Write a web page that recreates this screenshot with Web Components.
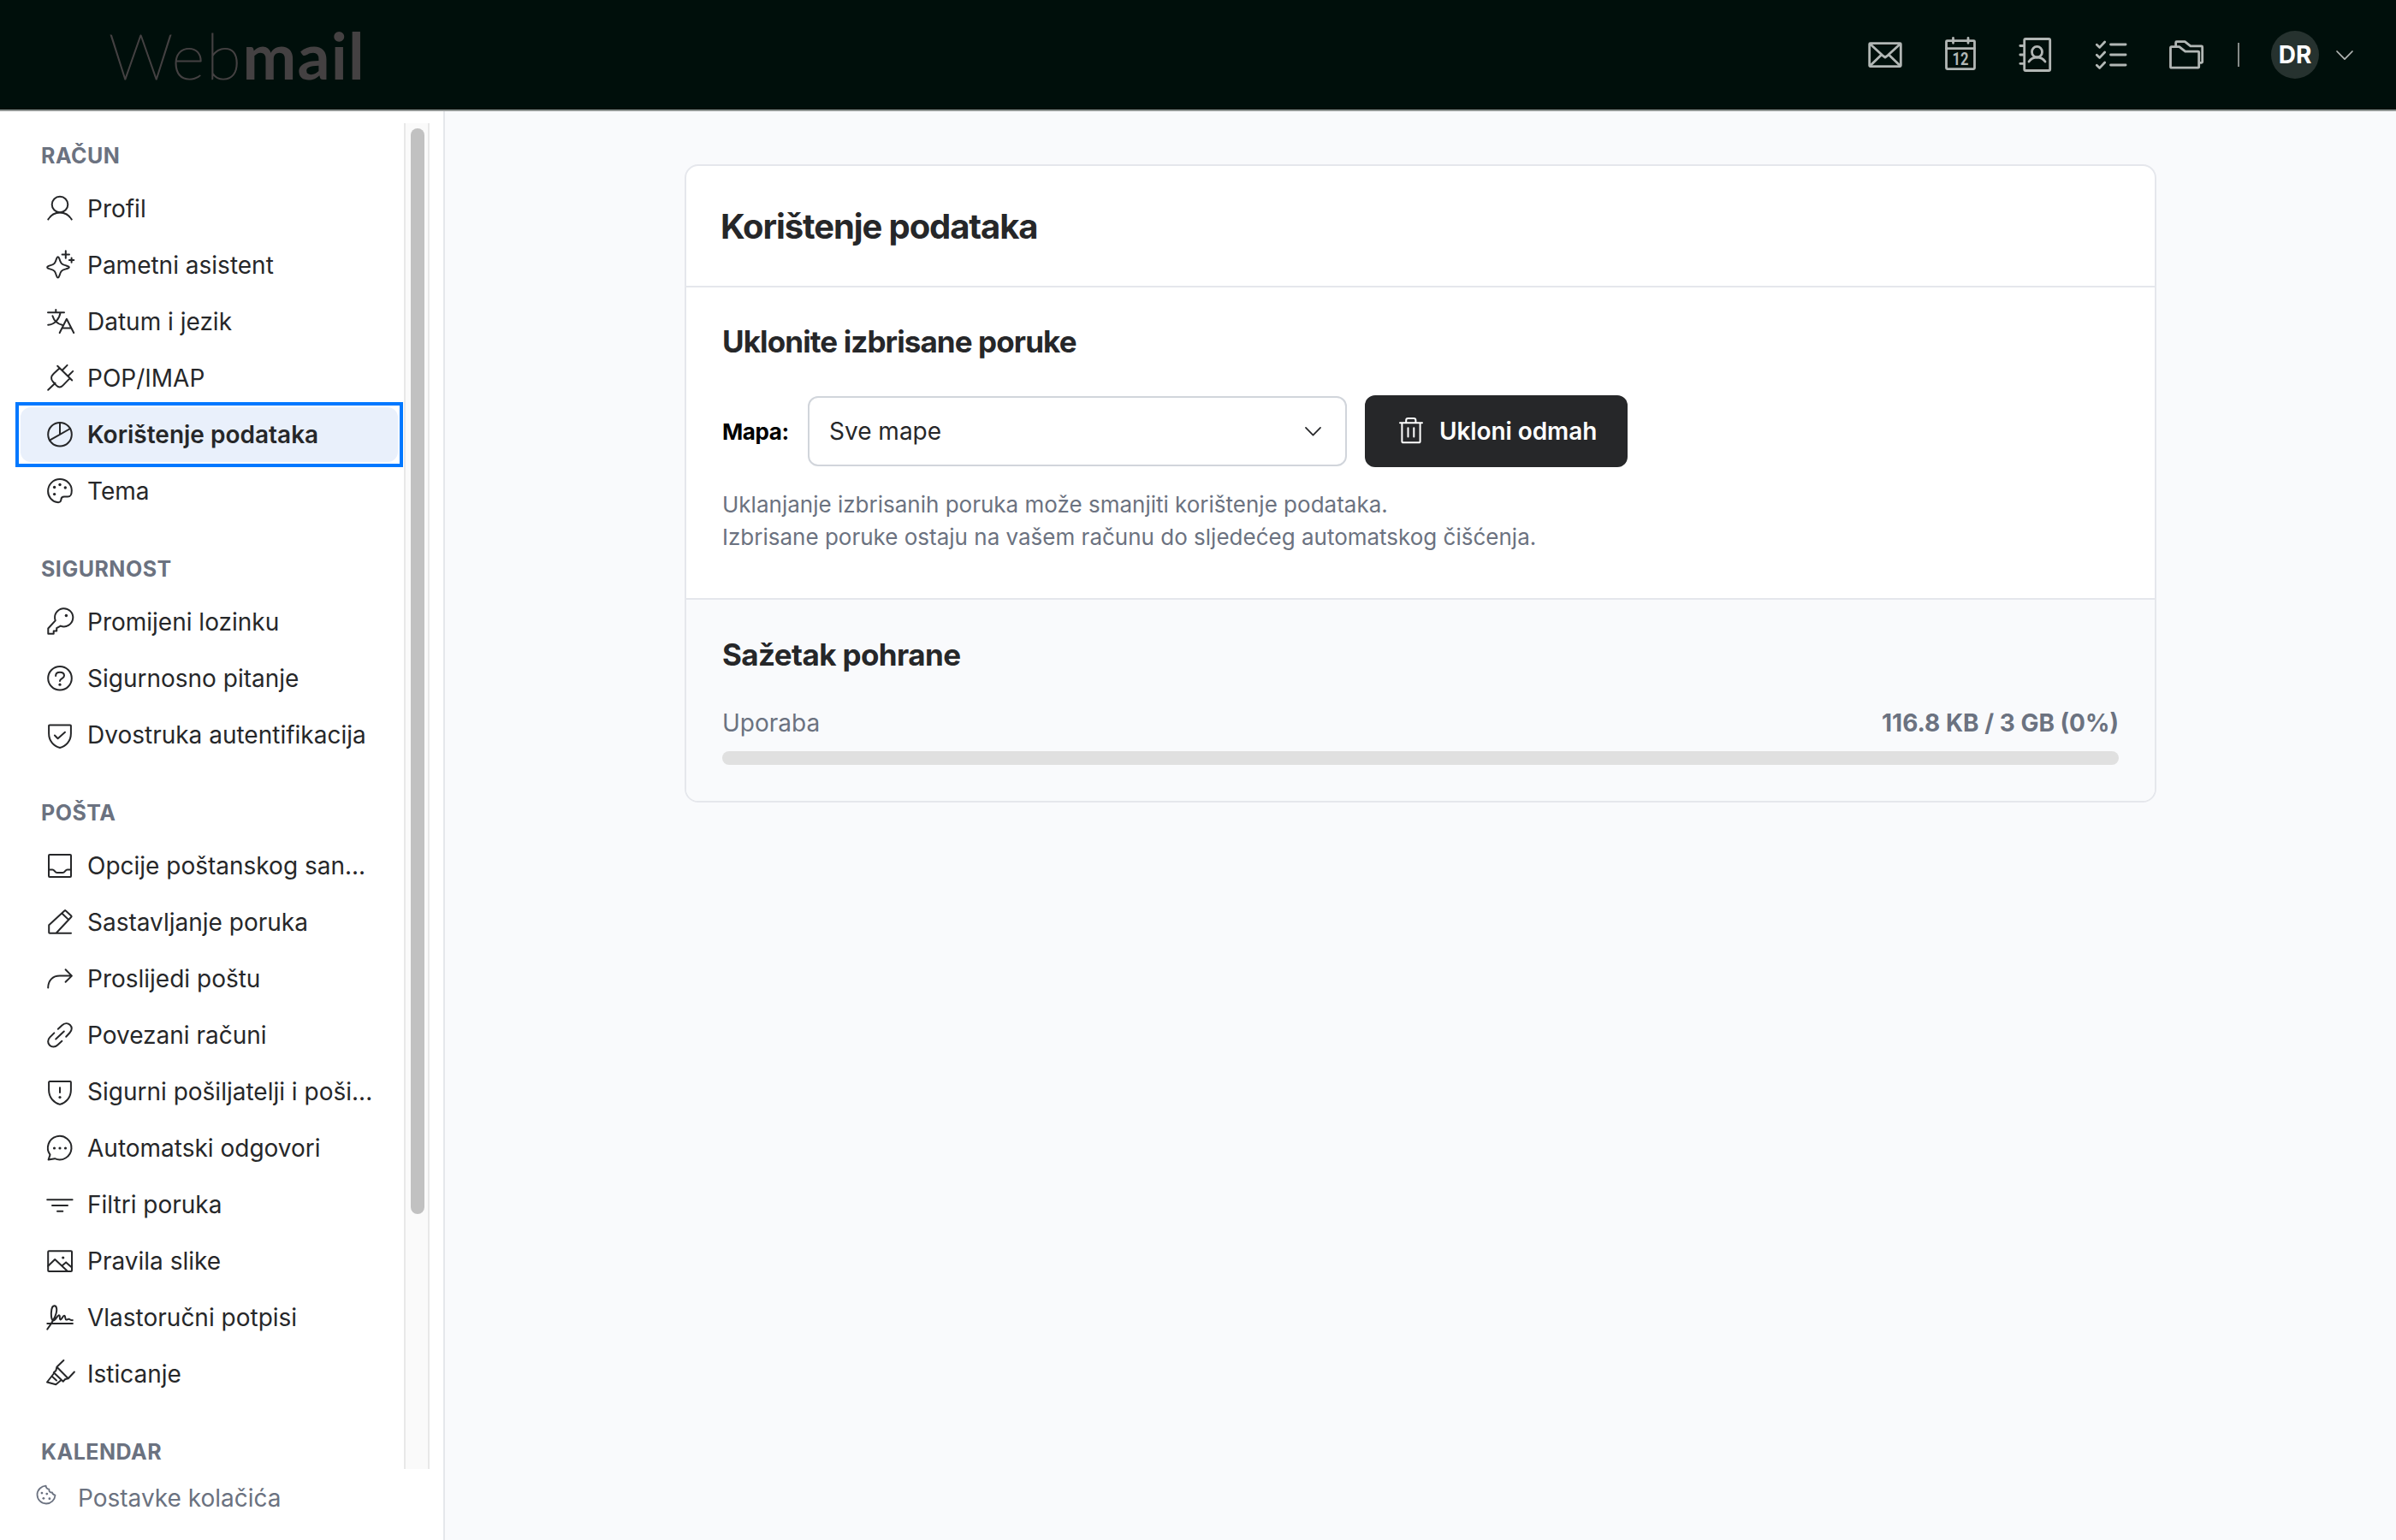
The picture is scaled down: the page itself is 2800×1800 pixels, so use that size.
<!DOCTYPE html>
<html lang="hr">
<head>
<meta charset="utf-8">
<title>Webmail - Korištenje podataka</title>
<style>
  html, body {
    margin: 0;
    height: 100%;
    font-family: Inter, "Liberation Sans", sans-serif;
    font-size: 28px;
    color: #262729;
    background: #f9fafc;
  }
</style>
</head>
<body>
<webmail-app>
  <webmail-header slot="header" initials="DR"></webmail-header>

  <settings-nav slot="nav">
    <nav-section heading="Račun">
      <nav-item icon="user">Profil</nav-item>
      <nav-item icon="sparkle">Pametni asistent</nav-item>
      <nav-item icon="translate">Datum i jezik</nav-item>
      <nav-item icon="plug">POP/IMAP</nav-item>
      <nav-item icon="pie" selected>Korištenje podataka</nav-item>
      <nav-item icon="palette">Tema</nav-item>
    </nav-section>
    <nav-section heading="Sigurnost">
      <nav-item icon="key">Promijeni lozinku</nav-item>
      <nav-item icon="question">Sigurnosno pitanje</nav-item>
      <nav-item icon="shieldCheck">Dvostruka autentifikacija</nav-item>
    </nav-section>
    <nav-section heading="Pošta">
      <nav-item icon="inbox">Opcije poštanskog san...</nav-item>
      <nav-item icon="pencil">Sastavljanje poruka</nav-item>
      <nav-item icon="forward">Proslijedi poštu</nav-item>
      <nav-item icon="link">Povezani računi</nav-item>
      <nav-item icon="shieldAlert">Sigurni pošiljatelji i poši...</nav-item>
      <nav-item icon="chat">Automatski odgovori</nav-item>
      <nav-item icon="filter">Filtri poruka</nav-item>
      <nav-item icon="image">Pravila slike</nav-item>
      <nav-item icon="signature">Vlastoručni potpisi</nav-item>
      <nav-item icon="highlighter">Isticanje</nav-item>
    </nav-section>
    <nav-section heading="Kalendar"></nav-section>
    <span slot="footer">Postavke kolačića</span>
  </settings-nav>

  <settings-card>
    <span slot="title">Korištenje podataka</span>
    <purge-form slot="body"></purge-form>
    <storage-summary slot="summary" used="116.8 KB" total="3 GB" percent="0"></storage-summary>
  </settings-card>
</webmail-app>

<script>
const ICONS = {
  // sidebar, 36 x 36
  user: `<circle cx="18" cy="13" r="9.3"/><path d="M4.3 30.4C7.2 25.6 12 22.4 18 22.4s10.8 3.2 13.7 8"/>`,
  sparkle: `<path d="M15.7 8.2c1 0 1.3 1 1.7 2.3 1.6 5.4 2.2 6.3 7.7 7.9 2.6.8 3.7 1.1 3.7 2s-1.1 1.2-3.7 2c-5.5 1.6-6.1 2.5-7.7 7.9-.4 1.3-.7 2.3-1.7 2.3s-1.3-1-1.700-2.300c-1.600-5.400-2.200-6.300-7.700-7.900-2.600-.8-3.100-1.100-3.100-2s.5-1.200 3.100-2c5.500-1.600 6.100-2.500 7.700-7.900.4-1.300.7-2.300 1.700-2.300z"/><path d="M24.8 1.3v8.400M20.600 5.500H29M31.600 9.400v5.400M28.900 12.100h5.400"/>`,
  translate: `<path d="M4 7.200h19M13.300 4v3.200M18.600 7.400C17.500 14.500 12 21.500 4.200 21.800M9.400 11.300C11 16.500 15 20.500 20.600 21.800M17.700 31l8.200-16.200L34.200 31M20.600 25.600h10.600"/>`,
  plug: `<path d="M4.200 31.800l8.300-8.100M15.200 3.800l17 16.700M21.500 8l5.100-5.100M28.300 14.800l4.900-4.900M17.700 6.300l-7 6.500c-3.200 3-3.600 6.600-.7 9.500l4 4.300c2.500 2.500 5 2.400 7.400 0l8-8.200"/>`,
  pie: `<circle cx="18" cy="17.800" r="13.800"/><path d="M18 17.800V4M6 24.700l24-13.700"/>`,
  palette: `<path d="M14.800 31C8.500 30 4.100 24.600 4.100 18 4.100 10.300 10.300 4.100 18 4.100S31.800 10 31.800 17.300c0 5.600-1.300 7.300-4.600 7.300h-4.100c-2.600 0-3.500 1.100-3.700 3.200-.2 2.500-1.500 3.800-4.600 3.200z"/><g fill="currentColor" stroke="none"><circle cx="11.600" cy="13.500" r="1.700"/><circle cx="18" cy="10.500" r="1.700"/><circle cx="24.300" cy="14" r="1.700"/><circle cx="11.600" cy="21.600" r="1.700"/></g>`,
  key: `<path d="M12.700 16.300L4.300 25.500v6.300h6.400v-3.300h3.500v-3.400l4.600-2.500A10.600 10.600 0 1 0 12.700 16.300z"/><circle cx="25.400" cy="10.500" r="1.700" fill="currentColor" stroke="none"/>`,
  question: `<circle cx="18" cy="17.800" r="13.800"/><path d="M13.100 15c0-2.600 2-4.200 4.900-4.200s5 1.600 5 4c0 3.400-5 3.200-5 6.200"/><circle cx="18" cy="25.200" r="1.600" fill="currentColor" stroke="none"/>`,
  shieldCheck: `<path d="M6 6.400h24a.9.9 0 0 1 .9.9v9C30.900 25.300 25 31.400 18 33 11 31.400 5.100 25.300 5.100 16.300v-9a.9.9 0 0 1 .9-.9zM11.900 18.500l3.700 3.700 8.400-7.400"/>`,
  inbox: `<rect x="5" y="5" width="26" height="26" rx="1"/><path d="M5 22.400h4.300c2.500 0 2.600 3.700 5.500 3.700h6.400c2.900 0 3-3.700 5.500-3.700H31"/>`,
  pencil: `<path d="M31 30.700H6a.8.8 0 0 1-.8-.8v-8.600L23.400 4.500a1 1 0 0 1 1.400 0l6.500 5.900a1 1 0 0 1 0 1.400L13.800 30.500M20.300 7.500l8 7.600"/>`,
  forward: `<path d="M4.200 28.500C4.200 20 9.500 14.600 18 14.600h13.600M24.600 7.300l7.300 7.300-7.300 7.200"/>`,
  link: `<path d="M13.200 22.500l9.600-9M15.800 10.800l4.600-4.300c3.200-3 7-2.900 9.500-.5s2.500 6.200-.3 9l-4.400 4.700M11.300 15.400l-5 5c-2.800 2.800-2.800 6.800-.3 9.300s6.500 2.500 9.200-.2l5.200-4.700"/>`,
  shieldAlert: `<path d="M6 6.100h24a.9.9 0 0 1 .9.9v9C30.900 25 25 31.100 18 32.900 11 31.100 5.100 25 5.100 16V7a.9.9 0 0 1 .9-.9zM18 13.300v5.800"/><circle cx="18" cy="24.500" r="1.600" fill="currentColor" stroke="none"/>`,
  chat: `<path d="M4.600 31.600l1.900-5.900A13.800 13.800 0 1 1 12 30.200z"/><g fill="currentColor" stroke="none"><circle cx="11.500" cy="18" r="1.600"/><circle cx="18" cy="18" r="1.600"/><circle cx="24.500" cy="18" r="1.600"/></g>`,
  filter: `<path d="M3.200 12.300h29.400M9 19.100h18M15 25.800h6.300"/>`,
  image: `<rect x="4.200" y="6.300" width="27.800" height="23.800" rx="1"/><path d="M4.200 23.800l8-7.800 14.600 13.700M20.500 23.400l4.600-4 6.900 6"/><circle cx="21.700" cy="14" r="1.600" fill="currentColor" stroke="none"/>`,
  signature: `<path d="M3.300 25h29.600M3.300 31.600C8.500 25 15 14 14.200 7.800 13.600 3 9.300 3.100 8.300 8.500c-.9 5.500-.6 12.700 2 13 2.500.2 4.500-6 6.500-6.200 2.100-.1.100 4.900 1.600 5.200 1.700.3 3-4.700 4.600-4.700 1.800 0 .7 4.500 2.400 4.700 1.500.1 2-1.200 3.200-.8 1.200.5 1.600 1.700 4.200 1.400"/>`,
  highlighter: `<path d="M22.400 2l-8 7.700-1 4.300-2.600 2.300 11 10.400 2.400-2.700 3.500-.8 7.200-7.700M14.400 9.700l13.300 13.500M10.800 17.500L3 27.500l10.300 2.800 6-5M8.500 20.500l5.500 5"/>`,
  cookie: `<path d="M17.500 4.600c-6.800.4-13 6-13 13.400 0 7.500 6 13.500 13.500 13.500 7.200 0 13.100-5.600 13.500-12.800-2.400-.3-4-1.500-4.500-3.900-3.200 0-5-1.700-4.700-4.900-3-.4-4.700-2.300-4.800-5.300z"/><g fill="currentColor" stroke="none"><circle cx="11.500" cy="15.500" r="1.800"/><circle cx="19" cy="16.800" r="1.800"/><circle cx="14" cy="23.500" r="1.800"/><circle cx="23" cy="24" r="1.800"/></g>`,
  // header, 40 x 40
  mail: `<rect x="1.700" y="6.600" width="36.600" height="27" rx="1"/><path d="M2.500 7.500L17 20.800l3 2.200 3-2.200L37.500 7.500M2.500 32.800L16 19.800M37.500 32.800L24 19.800"/>`,
  calendar: `<rect x="3.500" y="3.600" width="33" height="33" rx="1"/><path d="M3.500 12.600h33M11.500.3v6M29 .3v6"/><text x="20" y="31.500" text-anchor="middle" textLength="19" lengthAdjust="spacingAndGlyphs" font-family="Roboto, sans-serif" font-size="20.500" font-weight="700" fill="currentColor" stroke="none">12</text>`,
  contacts: `<rect x="6.700" y="1.500" width="30" height="37" rx="1.500"/><path d="M1.800 9.500h4.900M1.800 20h4.900M1.800 30.300h4.900M12 28c2-3 5.300-5 9.500-5s7.500 2 9.500 5"/><ellipse cx="21.500" cy="16.700" rx="6" ry="6.300"/>`,
  tasks: `<path d="M19.500 8h17.600M19.500 20h17.600M19.500 32h17.600M3.300 8.200l3.400 3.200L12.700 5M3.300 20.200l3.400 3.200 6-6.400M3.300 32.200l3.400 3.200 6-6.400"/>`,
  folders: `<path d="M2.500 10.700h9.200l7 5.400h15a1 1 0 0 1 1 1v17.100a1 1 0 0 1-1 1H2.500a1 1 0 0 1-1-1V11.700a1 1 0 0 1 1-1zM7.700 10V5.700a1 1 0 0 1 1-1h9.600l6.600 5.200h12.800a1 1 0 0 1 1 1v17.400a1 1 0 0 1-1 1h-2.500"/>`,
  // shared
  chevron: `<path d="M1 1l9 9.200L19 1"/>`,
  trash: `<path d="M1 7.200h26M8.200 7V4.300A2.200 2.200 0 0 1 10.400 2.100h6.800a2.200 2.200 0 0 1 2.200 2.200V7M3.400 7.200V29a1.300 1.300 0 0 0 1.300 1.300h18.600a1.300 1.300 0 0 0 1.300-1.300V7.200M10.500 13.200v10.300M17.300 13.200v10.300"/>`
};

// <ui-icon name size box stroke>: box is "w h" of the drawing's own grid
class UiIcon extends HTMLElement {
  connectedCallback() {
    const root = this.shadowRoot || this.attachShadow({ mode: "open" });
    const [w, h] = (this.getAttribute("box") || "36 36").split(" ");
    const width = this.getAttribute("size") || w;
    root.innerHTML = `
      <style>
        :host { display: block; flex: none; line-height: 0; }
        svg { display: block; overflow: visible; }
      </style>
      <svg width="${width}" height="${(width * h) / w}" viewBox="0 0 ${w} ${h}"
        fill="none" stroke="currentColor" stroke-width="${this.getAttribute("stroke") || 2}"
        stroke-linecap="round" stroke-linejoin="round">${ICONS[this.getAttribute("name")]}</svg>`;
  }
}
customElements.define("ui-icon", UiIcon);

class WebmailApp extends HTMLElement {
  constructor() {
    super();
    this.attachShadow({ mode: "open" }).innerHTML = `
      <style>
        :host { display: flex; flex-direction: column; height: 100vh; min-height: 1800px; }
        .page { display: flex; flex: 1; min-height: 0; }
        main { flex: 1; display: flex; justify-content: center; align-items: flex-start; padding-top: 62px; }
      </style>
      <slot name="header"></slot>
      <div class="page">
        <slot name="nav"></slot>
        <main><slot></slot></main>
      </div>`;
  }
}
customElements.define("webmail-app", WebmailApp);

class WebmailHeader extends HTMLElement {
  constructor() {
    super();
    this.attachShadow({ mode: "open" });
  }

  connectedCallback() {
    const apps = ["mail", "calendar", "contacts", "tasks", "folders"];
    this.shadowRoot.innerHTML = `
      <style>
        :host {
          display: flex;
          align-items: center;
          justify-content: space-between;
          box-sizing: border-box;
          height: 130px;
          padding: 0 50px 0 127px;
          border-bottom: 2px solid #919694;
          background: #000f0b;
          color: #b2b7b5;
        }
        .logo {
          font-family: Lato, sans-serif;
          font-size: 75px;
          line-height: 90px;
          font-weight: 100;
          letter-spacing: 1.8px;
          color: #444142;
          -webkit-text-stroke: 1.2px #444142;
          white-space: nowrap;
        }
        .logo b { font-weight: 700; letter-spacing: 1.2px; -webkit-text-stroke: 0; }
        .tools, .apps { display: flex; align-items: center; }
        .apps { gap: 48px; }
        .rule { width: 2px; height: 28px; margin: 0 37px 0 40px; background: #858a88; }
        .avatar {
          display: flex;
          align-items: center;
          justify-content: center;
          width: 56px;
          height: 56px;
          margin-right: 20px;
          border-radius: 50%;
          background: #26322f;
          color: #fff;
          font-weight: 700;
        }
      </style>
      <div class="logo">Web<b>mail</b></div>
      <div class="tools">
        <div class="apps">
          ${apps.map((name) => `<ui-icon name="${name}" box="40 40" stroke="2.800"></ui-icon>`).join("")}
        </div>
        <div class="rule"></div>
        <div class="avatar">${this.getAttribute("initials")}</div>
        <ui-icon name="chevron" box="20 11" stroke="1.700"></ui-icon>
      </div>`;
  }
}
customElements.define("webmail-header", WebmailHeader);

class SettingsNav extends HTMLElement {
  constructor() {
    super();
    this.attachShadow({ mode: "open" }).innerHTML = `
      <style>
        :host {
          display: flex;
          flex-direction: column;
          box-sizing: border-box;
          width: 520px;
          padding-top: 14px;
          border-right: 2px solid #e5e7eb;
          background: #fff;
        }
        .scroll { display: flex; height: 1573px; }
        .list {
          display: flex;
          flex-direction: column;
          gap: 42px;
          box-sizing: border-box;
          width: 472px;
          padding: 22px 7px 0 24px;
        }
        .rail {
          box-sizing: border-box;
          width: 30px;
          padding: 6px;
          border: solid #e8e8e8;
          border-width: 0 2px;
          background: #fafafa;
        }
        .thumb { width: 16px; height: 1269px; border-radius: 8px; background: #c1c1c1; }
        footer { display: flex; align-items: flex-start; padding: 18px 0 0 40px; color: #6b7280; }
        footer ui-icon { margin: -2px 23px 0 0; }
        footer div { line-height: 32px; }
      </style>
      <div class="scroll">
        <div class="list"><slot></slot></div>
        <div class="rail"><div class="thumb"></div></div>
      </div>
      <footer>
        <ui-icon name="cookie" size="28" stroke="2.300"></ui-icon>
        <div><slot name="footer"></slot></div>
      </footer>`;
  }
}
customElements.define("settings-nav", SettingsNav);

class NavSection extends HTMLElement {
  constructor() {
    super();
    this.attachShadow({ mode: "open" });
  }

  connectedCallback() {
    this.shadowRoot.innerHTML = `
      <style>
        :host { display: block; }
        h3 {
          margin: 0 0 14px;
          padding-left: 24px;
          font-size: 25px;
          line-height: 32px;
          font-weight: 700;
          letter-spacing: 0.5px;
          text-transform: uppercase;
          color: #6b7280;
        }
        .items { display: flex; flex-direction: column; gap: 2px; margin-bottom: 1px; }
      </style>
      <h3>${this.getAttribute("heading")}</h3>
      <div class="items"><slot></slot></div>`;
  }
}
customElements.define("nav-section", NavSection);

class NavItem extends HTMLElement {
  constructor() {
    super();
    this.attachShadow({ mode: "open" });
  }

  connectedCallback() {
    this.shadowRoot.innerHTML = `
      <style>
        :host {
          display: flex;
          align-items: center;
          gap: 14px;
          height: 64px;
          padding-left: 28px;
          border-radius: 12px;
          white-space: nowrap;
        }
        :host([selected]) {
          position: relative;
          background: #e9f0fb;
          font-weight: 600;
        }
        /* square focus ring around the rounded row */
        :host([selected])::after {
          content: "";
          position: absolute;
          inset: -6px;
          border: 4px solid #0078ff;
        }
      </style>
      <ui-icon name="${this.getAttribute("icon")}"></ui-icon>
      <div><slot></slot></div>`;
  }
}
customElements.define("nav-item", NavItem);

class SettingsCard extends HTMLElement {
  constructor() {
    super();
    this.attachShadow({ mode: "open" }).innerHTML = `
      <style>
        :host {
          display: block;
          box-sizing: border-box;
          width: 1720px;
          border: 2px solid #e5e7ec;
          border-radius: 16px;
          background: #fff;
          overflow: hidden;
        }
        h1 {
          display: flex;
          align-items: center;
          height: 140px;
          margin: 0;
          padding: 0 40px;
          font-size: 40px;
          font-weight: 650;
          letter-spacing: -1.1px;
        }
        section { border-top: 2px solid #e5e7ec; }
        .body { height: 363px; }
        .summary { height: 235px; background: #f9fafc; }
      </style>
      <h1><slot name="title"></slot></h1>
      <section class="body"><slot name="body"></slot></section>
      <section class="summary"><slot name="summary"></slot></section>`;
  }
}
customElements.define("settings-card", SettingsCard);

class PurgeForm extends HTMLElement {
  constructor() {
    super();
    this.attachShadow({ mode: "open" }).innerHTML = `
      <style>
        :host { display: block; padding: 40px 42px 0; }
        h2 {
          margin: 0 0 40px;
          font-size: 35px;
          line-height: 46px;
          font-weight: 650;
          letter-spacing: -0.9px;
        }
        .row { display: flex; align-items: center; }
        label { width: 100px; font-size: 26px; font-weight: 700; letter-spacing: -0.4px; color: #000; }
        .select {
          display: flex;
          align-items: center;
          justify-content: space-between;
          box-sizing: border-box;
          width: 630px;
          height: 82px;
          margin-right: 21px;
          padding: 0 28px 0 23px;
          border: 2px solid #d1d5db;
          border-radius: 12px;
        }
        button {
          display: flex;
          align-items: center;
          gap: 19px;
          box-sizing: border-box;
          width: 307px;
          height: 84px;
          padding: 0 0 0 40px;
          border: 0;
          border-radius: 12px;
          background: #262729;
          color: #fff;
          font: inherit;
          font-weight: 600;
          letter-spacing: -0.1px;
          white-space: nowrap;
        }
        button ui-icon { margin-bottom: 2px; }
        p { margin: 25px 0 0; font-size: 26px; line-height: 38px; color: #6b7280; }
      </style>
      <h2>Uklonite izbrisane poruke</h2>
      <div class="row">
        <label>Mapa:</label>
        <div class="select">Sve mape<ui-icon name="chevron" box="20 11" size="19" stroke="1.800"></ui-icon></div>
        <button><ui-icon name="trash" box="28 32"></ui-icon>Ukloni odmah</button>
      </div>
      <p>Uklanjanje izbrisanih poruka može smanjiti korištenje podataka.<br>Izbrisane poruke ostaju na vašem računu do sljedećeg automatskog čišćenja.</p>`;
  }
}
customElements.define("purge-form", PurgeForm);

class StorageSummary extends HTMLElement {
  constructor() {
    super();
    this.attachShadow({ mode: "open" });
  }

  connectedCallback() {
    const used = this.getAttribute("used");
    const total = this.getAttribute("total");
    const percent = this.getAttribute("percent");
    this.shadowRoot.innerHTML = `
      <style>
        :host { display: block; padding: 41px 42px 0; color: #6b7280; }
        h2 {
          margin: 0 0 39px;
          font-size: 35px;
          line-height: 46px;
          font-weight: 650;
          letter-spacing: -0.6px;
          color: #262729;
        }
        .labels { display: flex; justify-content: space-between; line-height: 36px; }
        b { font-weight: 700; }
        .bar { height: 16px; margin-top: 15px; border-radius: 8px; background: #e0e0e0; overflow: hidden; }
        .fill { height: 100%; width: ${percent}%; background: #0078ff; }
      </style>
      <h2>Sažetak pohrane</h2>
      <div class="labels"><span>Uporaba</span><b>${used} / ${total} (${percent}%)</b></div>
      <div class="bar"><div class="fill"></div></div>`;
  }
}
customElements.define("storage-summary", StorageSummary);
</script>
</body>
</html>
